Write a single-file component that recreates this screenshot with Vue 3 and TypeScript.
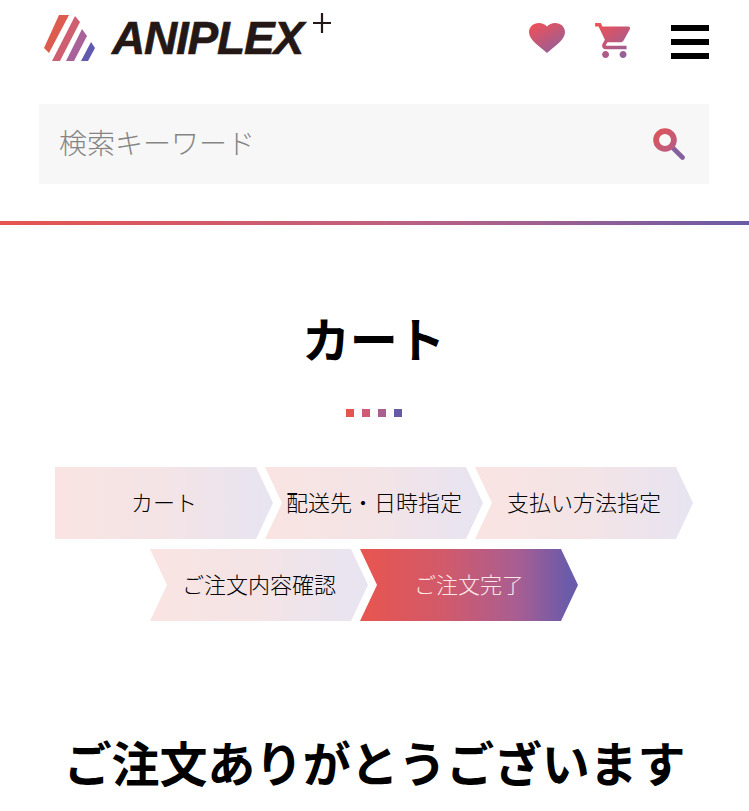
<script setup lang="ts">
const rowOne: string[] = ['カート', '配送先・日時指定', '支払い方法指定']
</script>

<template>
  <div class="page">
    <svg width="0" height="0" class="defs" aria-hidden="true">
      <defs>
        <linearGradient id="iconGrad" x1="0.1" y1="0.05" x2="0.75" y2="1">
          <stop offset="0" stop-color="#ee5058" />
          <stop offset="1" stop-color="#94609a" />
        </linearGradient>
        <linearGradient id="searchGrad" x1="0.1" y1="0.1" x2="1" y2="1">
          <stop offset="0" stop-color="#d9555e" />
          <stop offset="1" stop-color="#bb5c84" />
        </linearGradient>
      </defs>
    </svg>

    <header class="header">
      <a class="logo">
        <svg class="mark" viewBox="44 14 52 48" width="52" height="48">
          <polygon points="59,15 69,15 49,53 44,48" fill="#dc5c50" />
          <polygon points="75,16 80,22 60,61 52,61" fill="#cf5f70" />
          <polygon points="82,29 87,36 74,61 66,61" fill="#a9619a" />
          <polygon points="91,42 95,48 88,61 81,61" fill="#5f5ab0" />
        </svg>
        <span class="wordmark">ANIPLEX</span>
        <svg class="plus" viewBox="0 0 18 20" width="18" height="20">
          <path d="M0 10H18M9 0V20" stroke="#231815" stroke-width="2.2" fill="none" />
        </svg>
      </a>
      <div class="actions">
        <svg class="heart" viewBox="2 3 20 18.35" width="36" height="30" preserveAspectRatio="none">
          <path fill="url(#iconGrad)" d="M12 21.35l-1.45-1.32C5.4 15.36 2 12.28 2 8.5 2 5.42 4.42 3 7.5 3c1.74 0 3.41.81 4.5 2.09C13.09 3.81 14.76 3 16.5 3 19.58 3 22 5.42 22 8.5c0 3.78-3.4 6.86-8.55 11.54L12 21.35z" />
        </svg>
        <svg class="cart" viewBox="1 2 20.5 20" width="36" height="35">
          <path fill="url(#iconGrad)" d="M7 18c-1.1 0-1.99.9-1.99 2S5.9 22 7 22s2-.9 2-2-.9-2-2-2zM1 2v2h2l3.6 7.59-1.35 2.45c-.16.28-.25.61-.25.96 0 1.1.9 2 2 2h12v-2H7.42c-.14 0-.25-.11-.25-.25l.03-.12.9-1.63h7.45c.75 0 1.41-.41 1.75-1.03l3.58-6.47c.08-.14.12-.31.12-.48 0-.55-.45-1-1-1H5.21l-.94-2H1zm16 16c-1.1 0-1.99.9-1.99 2s.89 2 1.99 2 2-.9 2-2-.9-2-2-2z" />
        </svg>
        <div class="menu"><i></i><i></i><i></i></div>
      </div>
    </header>

    <div class="search">
      <span class="placeholder">検索キーワード</span>
      <svg class="search-icon" viewBox="0 0 32 32" width="32" height="32">
        <path d="M19 19L29.5 29.5" stroke="#85609f" stroke-width="4.6" stroke-linecap="round" fill="none" />
        <circle cx="12" cy="12" r="8.9" fill="none" stroke="url(#searchGrad)" stroke-width="5.8" />
      </svg>
    </div>

    <div class="rule"></div>

    <h1 class="title">カート</h1>
    <div class="dots"><i class="d1"></i><i class="d2"></i><i class="d3"></i><i class="d4"></i></div>

    <div class="steps">
      <div class="row row-one">
        <div v-for="(label, i) in rowOne" :key="label" class="step" :class="{ first: i === 0 }">{{ label }}</div>
      </div>
      <div class="row row-two">
        <div class="step">ご注文内容確認</div>
        <div class="step active">ご注文完了</div>
      </div>
    </div>

    <h2 class="thanks">ご注文ありがとうございます</h2>
  </div>
</template>

<style scoped>
.page {
  width: 749px;
  height: 811px;
  overflow: hidden;
  background: #fff;
  color: #000;
  font-family: "Noto Sans CJK JP", "Noto Sans", sans-serif;
}
.defs {
  position: absolute;
}
.header {
  height: 104px;
  display: flex;
  justify-content: space-between;
  align-items: flex-start;
  padding: 0 40px 0 44px;
  box-sizing: border-box;
}
.logo {
  display: flex;
  align-items: flex-start;
}
.mark {
  display: block;
  margin-top: 14px;
}
.wordmark {
  margin: 12px 0 0 16px;
  font-family: "Liberation Sans", sans-serif;
  font-style: italic;
  font-weight: 700;
  font-size: 46px;
  line-height: 52px;
  letter-spacing: -1.2px;
  color: #231815;
  -webkit-text-stroke: 0.6px #231815;
}
.plus {
  display: block;
  margin: 13px 0 0 10px;
}
.actions {
  display: flex;
  align-items: flex-start;
}
.heart {
  display: block;
  margin-top: 23px;
}
.cart {
  display: block;
  margin: 23px 0 0 30px;
}
.menu {
  margin: 25px 0 0 40px;
  width: 38px;
  display: flex;
  flex-direction: column;
  gap: 8px;
}
.menu i {
  display: block;
  height: 6px;
  background: #000;
}
.search {
  margin: 0 40px 0 39px;
  height: 80px;
  background: #f7f7f7;
  display: flex;
  align-items: center;
  justify-content: space-between;
  padding: 0 24px 0 20px;
}
.placeholder {
  font-size: 28px;
  font-weight: 300;
  line-height: 40px;
  margin-bottom: 4px;
  color: #858585;
}
.search-icon {
  display: block;
}
.rule {
  margin-top: 37px;
  height: 4px;
  background: linear-gradient(90deg, #e6544f 0%, #c25f7e 50%, #a4608f 70%, #6a5ba6 100%);
  box-shadow: 0 3px 6px rgba(0, 0, 0, 0.03);
}
.title {
  margin: 80px 0 0;
  font-size: 48px;
  line-height: 64px;
  font-weight: 700;
  text-align: center;
  letter-spacing: -0.3px;
  padding-right: 2px;
}
.dots {
  margin-top: 40px;
  display: flex;
  justify-content: center;
  gap: 8px;
  padding-right: 2px;
}
.dots i {
  display: block;
  width: 8px;
  height: 8px;
}
.d1 { background: #e5544f; }
.d2 { background: #cf5c74; }
.d3 { background: #a8608f; }
.d4 { background: #655aa6; }
.steps {
  margin-top: 50px;
  display: flex;
  flex-direction: column;
  gap: 10px;
}
.row {
  display: flex;
}
.row-one {
  padding-left: 55px;
}
.row-two {
  padding-left: 150px;
}
.step {
  width: 218px;
  height: 72px;
  flex: none;
  display: flex;
  align-items: center;
  justify-content: center;
  padding-bottom: 5px;
  box-sizing: border-box;
  font-size: 22px;
  font-weight: 300;
  color: #000;
  background: linear-gradient(90deg, #f9e4e2 0%, #f4e4e6 50%, #e7e4f1 100%);
  clip-path: polygon(0 0, calc(100% - 17px) 0, 100% 50%, calc(100% - 17px) 100%, 0 100%, 17px 50%);
}
.step + .step {
  margin-left: -8px;
}
.step.first {
  clip-path: polygon(0 0, calc(100% - 17px) 0, 100% 50%, calc(100% - 17px) 100%, 0 100%);
}
.step.active {
  color: #fde8e8;
  background: linear-gradient(90deg, #e8554f 0%, #d05a6c 40%, #a85e92 72%, #6a5bab 96%);
}
.thanks {
  margin: 108px 0 0;
  font-size: 48px;
  line-height: 64px;
  font-weight: 700;
  text-align: center;
  letter-spacing: -0.2px;
}
</style>
